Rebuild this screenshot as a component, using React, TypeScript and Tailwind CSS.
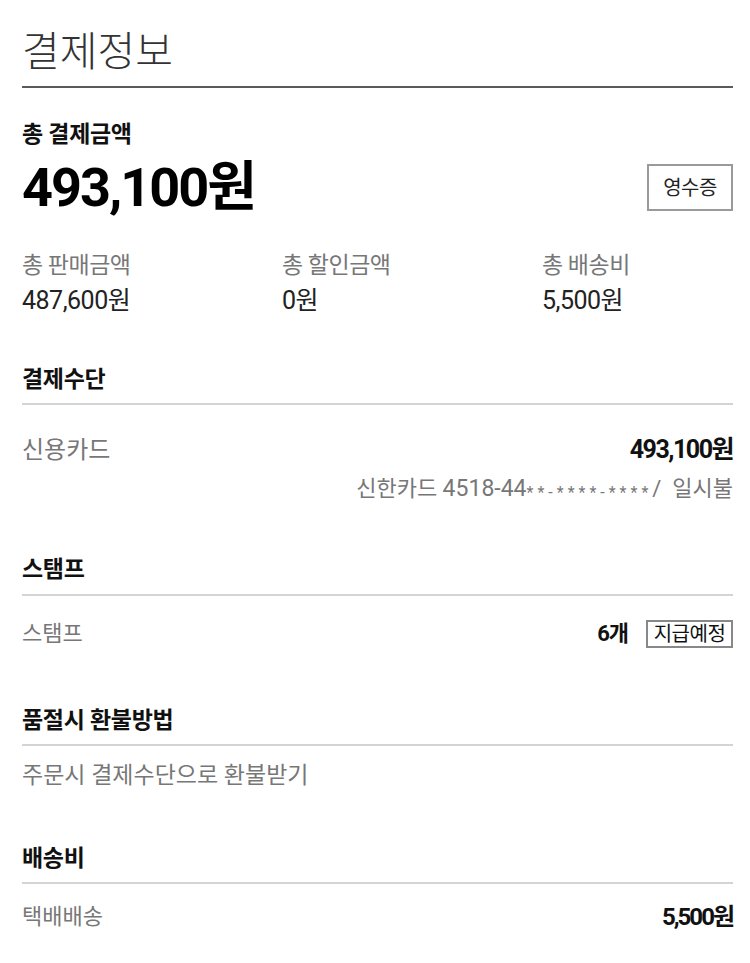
import React from "react";

const Heading = ({ children, className = "" }: { children: React.ReactNode; className?: string }) => (
  <div className={`text-[23px] leading-[24px] font-bold text-[#111] tracking-[-0.3px] ${className}`}>{children}</div>
);

const Rule = ({ className = "" }: { className?: string }) => <div className={`h-[2px] bg-[#d4d4d4] ${className}`} />;

const App = () => {
  const summary = [
    { label: "총 판매금액", value: "487,600원" },
    { label: "총 할인금액", value: "0원" },
    { label: "총 배송비", value: "5,500원" },
  ];

  return (
    <div className="w-[750px] min-h-[963px] bg-white pl-[22px] pr-[17px] font-['Roboto','Noto_Sans_CJK_KR',sans-serif] flex flex-col">
      <h1 className="mt-[32px] text-[41px] leading-[40px] font-light text-[#333]">결제정보</h1>
      <div className="mt-[14px] h-[2px] bg-[#5a5a5a]" />

      <Heading className="mt-[35px]">총 결제금액</Heading>
      <div className="mt-[17px] h-[47px] flex items-center justify-between">
        <span className="text-[54px] leading-none font-bold text-black tracking-[-2px]">493,100원</span>
        <button className="w-[86px] h-[47px] border-2 border-[#9a9a9a] bg-white text-[20px] text-[#222] tracking-[-0.5px]">영수증</button>
      </div>

      <div className="mt-[42px] grid grid-cols-[260px_260px_1fr]">
        {summary.map((s) => (
          <div key={s.label}>
            <div className="text-[23px] leading-[26px] text-[#777] tracking-[-0.5px]">{s.label}</div>
            <div className="mt-[9px] text-[25px] leading-[26px] text-[#222] tracking-[-0.5px]">{s.value}</div>
          </div>
        ))}
      </div>

      <Heading className="mt-[54px]">결제수단</Heading>
      <Rule className="mt-[11px]" />
      <div className="mt-[32px] flex items-center justify-between leading-[26px]">
        <span className="text-[24px] text-[#777]">신용카드</span>
        <span className="text-[25px] font-bold text-[#111] tracking-[-1.5px]">493,100원</span>
      </div>
      <div className="mt-[13px] text-right text-[22px] leading-[26px] text-[#777] whitespace-nowrap">
        신한카드 <span className="text-[23px]">4518-44</span>
        <span className="text-[16px] tracking-[4px] relative top-[2px]">**-****-****</span>/&nbsp; 일시불
      </div>

      <Heading className="mt-[54px]">스탬프</Heading>
      <Rule className="mt-[12px]" />
      <div className="mt-[24px] flex items-center justify-between leading-[26px]">
        <span className="text-[22px] text-[#777]">스탬프</span>
        <div className="flex items-center gap-[18px]">
          <span className="text-[22px] font-bold text-[#111] tracking-[-1px]">6개</span>
          <span className="w-[87px] h-[28px] border-2 border-[#888] flex items-center justify-center text-[20px] text-[#111] tracking-[-0.5px]">지급예정</span>
        </div>
      </div>

      <Heading className="mt-[61px]">품절시 환불방법</Heading>
      <Rule className="mt-[11px]" />
      <div className="mt-[17px] text-[23px] leading-[26px] text-[#777]">주문시 결제수단으로 환불받기</div>

      <Heading className="mt-[58px]">배송비</Heading>
      <Rule className="mt-[11px]" />
      <div className="mt-[20px] flex items-center justify-between leading-[26px]">
        <span className="text-[22px] text-[#777]">택배배송</span>
        <span className="text-[24px] font-bold text-[#111] tracking-[-2px]">5,500원</span>
      </div>
    </div>
  );
};

export default App;
